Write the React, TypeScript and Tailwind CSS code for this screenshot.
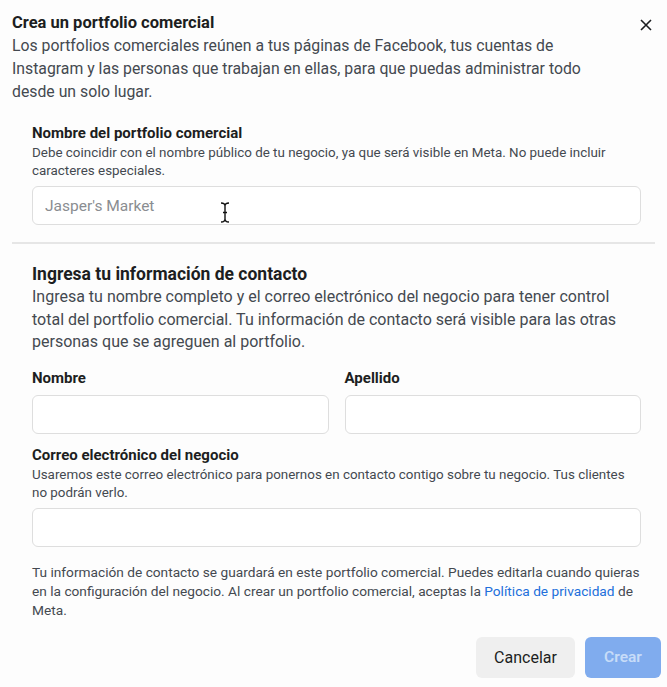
import React from 'react';

const inputClass =
    'h-[39px] w-full rounded-md border border-[#dedede] bg-white px-3 text-[15.5px] text-[#1c1e21] placeholder:text-[#8a8d91] outline-none';

const Field = ({ label, hint, children }: { label: string; hint?: React.ReactNode; children: React.ReactNode }) => (
    <div>
        <div className="text-[15px] font-bold leading-[20px] text-[#1c1e21]">{label}</div>
        {hint && <p className="mt-[1px] text-[13.4px] leading-[17.5px] text-[#444950]">{hint}</p>}
        <div className="mt-[7px]">{children}</div>
    </div>
);

const CreatePortfolioDialog = () => {
    return (
        <div className="relative min-h-[687px] w-[667px] bg-[#fdfdfd] font-['Roboto',sans-serif] text-[#1c1e21]">
            <div className="flex items-start justify-between pl-3 pr-[15px] pt-[12px]">
                <h2 className="text-[16.5px] font-bold leading-[22px]">Crea un portfolio comercial</h2>
                <button className="mt-[7px] text-[#1c1e21]">
                    <svg width="12" height="12" viewBox="0 0 12 12" fill="none" stroke="currentColor" strokeWidth="1.6">
                        <path d="M1 1l10 10M11 1L1 11" />
                    </svg>
                </button>
            </div>
            <p className="pl-3 pr-[65px] text-[15.8px] leading-[23px] text-[#444950]">
                Los portfolios comerciales reúnen a tus páginas de Facebook, tus cuentas de Instagram y las personas que
                trabajan en ellas, para que puedas administrar todo desde un solo lugar.
            </p>

            <div className="mt-[20px] pl-8 pr-[26px]">
                <Field
                    label="Nombre del portfolio comercial"
                    hint="Debe coincidir con el nombre público de tu negocio, ya que será visible en Meta. No puede incluir caracteres especiales."
                >
                    <div className="relative">
                        <input className={inputClass} placeholder="Jasper's Market" />
                        {/* mouse text cursor hovering the input */}
                        <svg
                            className="absolute left-[188px] top-[16px]"
                            width="10"
                            height="21"
                            viewBox="0 0 10 21"
                            fill="none"
                            stroke="#111"
                            strokeWidth="1.4"
                        >
                            <path d="M1 1c2 0 4 1 4 3v13c0 2-2 3-4 3M9 1c-2 0-4 1-4 3v13c0 2 2 3 4 3M3 10.5h4" />
                        </svg>
                    </div>
                </Field>
            </div>

            <div className="mx-3 mt-[17px] h-[2px] bg-[#e6e6e6]" />

            <div className="mt-[18px] pl-8 pr-[26px]">
                <h3 className="text-[17.5px] font-bold leading-[24px]">Ingresa tu información de contacto</h3>
                <p className="pr-[11px] text-[16px] leading-[22.5px] text-[#444950]">
                    Ingresa tu nombre completo y el correo electrónico del negocio para tener control total del portfolio
                    comercial. Tu información de contacto será visible para las otras personas que se agreguen al portfolio.
                </p>

                <div className="mt-[14.5px] grid grid-cols-2 gap-[16px]">
                    <Field label="Nombre">
                        <input className={inputClass} />
                    </Field>
                    <Field label="Apellido">
                        <input className={inputClass} />
                    </Field>
                </div>

                <div className="mt-[11px]">
                    <Field
                        label="Correo electrónico del negocio"
                        hint="Usaremos este correo electrónico para ponernos en contacto contigo sobre tu negocio. Tus clientes no podrán verlo."
                    >
                        <input className={inputClass} />
                    </Field>
                </div>

                <p className="mr-[-7px] mt-[15.5px] text-[13.7px] leading-[19px] text-[#444950]">
                    Tu información de contacto se guardará en este portfolio comercial. Puedes editarla cuando quieras en la
                    configuración del negocio. Al crear un portfolio comercial, aceptas la{' '}
                    <a className="text-[#216fdb]">Política de privacidad</a> de Meta.
                </p>
            </div>

            <div className="mt-[17.5px] flex justify-end gap-[10px] pr-[6px]">
                <button className="h-[41px] w-[99px] rounded-md bg-[#efefef] text-[16px] font-normal text-[#1c1e21]">
                    Cancelar
                </button>
                <button className="h-[41px] w-[76px] rounded-md bg-[#80acee] text-[15.5px] font-semibold text-[#c7dcf8]">
                    Crear
                </button>
            </div>
        </div>
    );
};

export default function App() {
    return <CreatePortfolioDialog />;
}
